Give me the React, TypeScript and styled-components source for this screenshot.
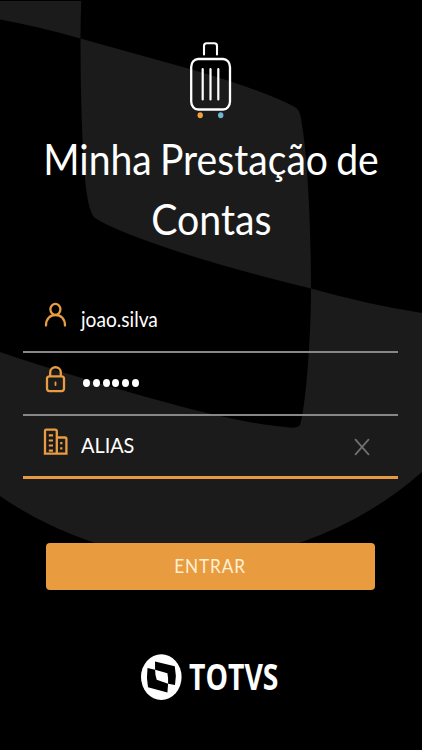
import React from "react";
import styled, { createGlobalStyle } from "styled-components";

const GlobalStyle = createGlobalStyle`
  * { box-sizing: border-box; }
  body { margin: 0; background: #000; }
`;

const Screen = styled.main`
  position: relative;
  width: 422px;
  height: 750px;
  overflow: hidden;
  background: #000;
  color: #fff;
  font-family: Lato, sans-serif;
`;

const Backdrop = styled.svg`
  position: absolute;
  inset: 0;
`;

const Content = styled.div`
  position: relative;
  display: flex;
  flex-direction: column;
  height: 100%;
`;

const Header = styled.header`
  display: flex;
  flex-direction: column;
  align-items: center;
  height: 288px;
  padding-top: 38px;
`;

const Title = styled.h1`
  margin: 3px 0 0;
  display: flex;
  flex-direction: column;
  align-items: center;
  font-size: 42px;
  font-weight: 400;
  line-height: 60px;
  word-spacing: -2px;
  white-space: nowrap;
`;

const Stretch = styled.span<{ $x: number; $origin?: string }>`
  display: inline-block;
  transform: scaleX(${(p) => p.$x});
  transform-origin: ${(p) => p.$origin ?? "center"};
  white-space: nowrap;
`;

const Form = styled.form`
  display: flex;
  flex-direction: column;
`;

const Field = styled.label<{ $height: number; $active?: boolean }>`
  display: flex;
  align-items: flex-start;
  height: ${(p) => p.$height}px;
  margin: 0 24px 0 23px;
  padding-left: 18px;
  border-bottom: ${(p) => (p.$active ? "3px solid #e39a42" : "2px solid #85888a")};
`;

const FieldIcon = styled.svg`
  flex: none;
  width: 30px;
  height: 32px;
  margin-top: 11px;
  fill: none;
  stroke: #e99c42;
  stroke-width: 2.3;
`;

const Value = styled.span<{ $top: number }>`
  flex: 1;
  margin: ${(p) => p.$top}px 0 0 10px;
  font-size: 21px;
  line-height: 26px;
`;

const Dots = styled.span`
  display: flex;
  flex: 1;
  gap: 2.8px;
  margin: 26.5px 0 0 12px;
`;

const Dot = styled.i`
  width: 7px;
  height: 8px;
  border-radius: 50%;
  background: #fff;
`;

const Clear = styled.svg`
  width: 16px;
  height: 18px;
  margin: 21.5px 28px 0 0;
  stroke: #707070;
  stroke-width: 1.8;
  stroke-linecap: round;
`;

const Submit = styled.button`
  height: 47px;
  margin: 64px 47px 0 46px;
  padding: 0;
  border: 0;
  border-radius: 4px;
  background: #e99b3f;
  color: #fff0d2;
  font-family: inherit;
  font-size: 18.7px;
  line-height: 47px;
  letter-spacing: 1px;
`;

const Brand = styled.footer`
  display: flex;
  align-items: center;
  gap: 7px;
  margin: 62px 0 0 140px;
  height: 50px;
`;

const BrandName = styled.span`
  font-family: "Open Sans", sans-serif;
  font-size: 35px;
  font-weight: 700;
  line-height: 50px;
`;

export default function App() {
  return (
    <>
      <GlobalStyle />
      <Screen>
        <Backdrop width="422" height="750" viewBox="0 0 422 750" fill="#1b1b1b">
          <path d="M0 1H81.300Q80.500 22 80.500 38.500Q36 26 0 19.500Z" />
          <path d="M80.500 38.500L190 69Q262 90 293 106Q298 108 300 114C307 145 311 220 311 288.500Q215 265 160 245.500Q112 229 95 218Q90 214 87 195C82 160 80.500 90 80.500 38.500Z" />
          <path d="M311 288.500Q370 305 422 313V472Q370 518 302 542Q197 578 92 542Q40 524 0 496V352Q32 363 72 375C150 399 235 423 285 427Q297 429 300 425C305 412 311 345 311 288.500Z" />
        </Backdrop>
        <Content>
          <Header>
            <svg width="46" height="88" viewBox="188 38 46 88" fill="none" stroke="#fff" strokeLinecap="round">
              <path d="M204 54.500V46Q204 43.300 206.600 43.300H214.400Q217 43.300 217 46V54.500" strokeWidth="2.100" />
              <rect x="191.200" y="59" width="38.800" height="50.500" rx="7" ry="8" strokeWidth="2.300" />
              <path d="M202.700 69V99.500M210.500 69V99.500M218.300 69V99.500" strokeWidth="2.200" />
              <ellipse cx="200.200" cy="115.200" rx="2.700" ry="3" fill="#efa03c" stroke="none" />
              <ellipse cx="220.700" cy="115.200" rx="2.700" ry="3" fill="#6cb6d0" stroke="none" />
            </svg>
            <Title>
              <Stretch $x={0.932}>Minha Prestação de</Stretch>
              <Stretch $x={0.935}>Contas</Stretch>
            </Title>
          </Header>
          <Form onSubmit={(e) => e.preventDefault()}>
            <Field $height={64.5}>
              <FieldIcon viewBox="41 299 30 32" strokeLinecap="round">
                <ellipse cx="55.400" cy="309.300" rx="5" ry="5.500" />
                <path d="M46 325.500C46 319 50 315 55.500 315S65 319 65 325.500" />
              </FieldIcon>
              <Value $top={17.5}><Stretch $x={0.91} $origin="left">joao.silva</Stretch></Value>
            </Field>
            <Field $height={63.5}>
              <FieldIcon viewBox="41 363 30 32">
                <rect x="47" y="375.300" width="17" height="14.800" rx="2.500" />
                <path d="M50.200 375V371.500C50.200 364.500 60.800 364.500 60.800 371.500V375" />
                <path d="M55.500 381.500V384" strokeLinecap="round" strokeWidth="1.800" />
              </FieldIcon>
              <Dots>{[0, 1, 2, 3, 4, 5].map((n) => <Dot key={n} />)}</Dots>
            </Field>
            <Field $height={63} $active>
              <FieldIcon viewBox="41 427 30 32">
                <path d="M45 453.700V431Q45 429.700 46.300 429.700H55.200Q56.800 429.700 56.800 431.500V453.700M57 437.500H65Q66.400 437.500 66.400 439V453.700M43.800 453.700H67.600" />
                <path d="M48.800 435.300H53M48.800 440.500H53M48.800 445.500H53M48.800 450.600H53M61.300 442V444.200M61.300 447.200V449.500" strokeWidth="2.200" />
              </FieldIcon>
              <Value $top={16}><Stretch $x={0.945} $origin="left">ALIAS</Stretch></Value>
              <Clear viewBox="0 0 16 18"><path d="M1.500 1.700L14.500 16.300M14.500 1.700L1.500 16.300" /></Clear>
            </Field>
            <Submit type="submit"><Stretch $x={0.92}>ENTRAR</Stretch></Submit>
          </Form>
          <Brand>
            <svg width="42" height="48" viewBox="140 652.500 42 48">
              <ellipse cx="161.300" cy="676.600" rx="20.300" ry="22.800" fill="#fff" />
              <path d="M155 661L174.800 665.800Q176.700 675 175 684.500L168.100 683.200Q168.400 677 167.400 672.700L155.100 669.200Z" />
              <path d="M147.500 667.500L155.100 669.200Q155.100 674.500 156.700 679.300L168.100 683.200L167.400 692L148 686.700Q146.200 677 147.500 667.500Z" />
            </svg>
            <BrandName><Stretch $x={0.81} $origin="left">TOTVS</Stretch></BrandName>
          </Brand>
        </Content>
      </Screen>
    </>
  );
}
